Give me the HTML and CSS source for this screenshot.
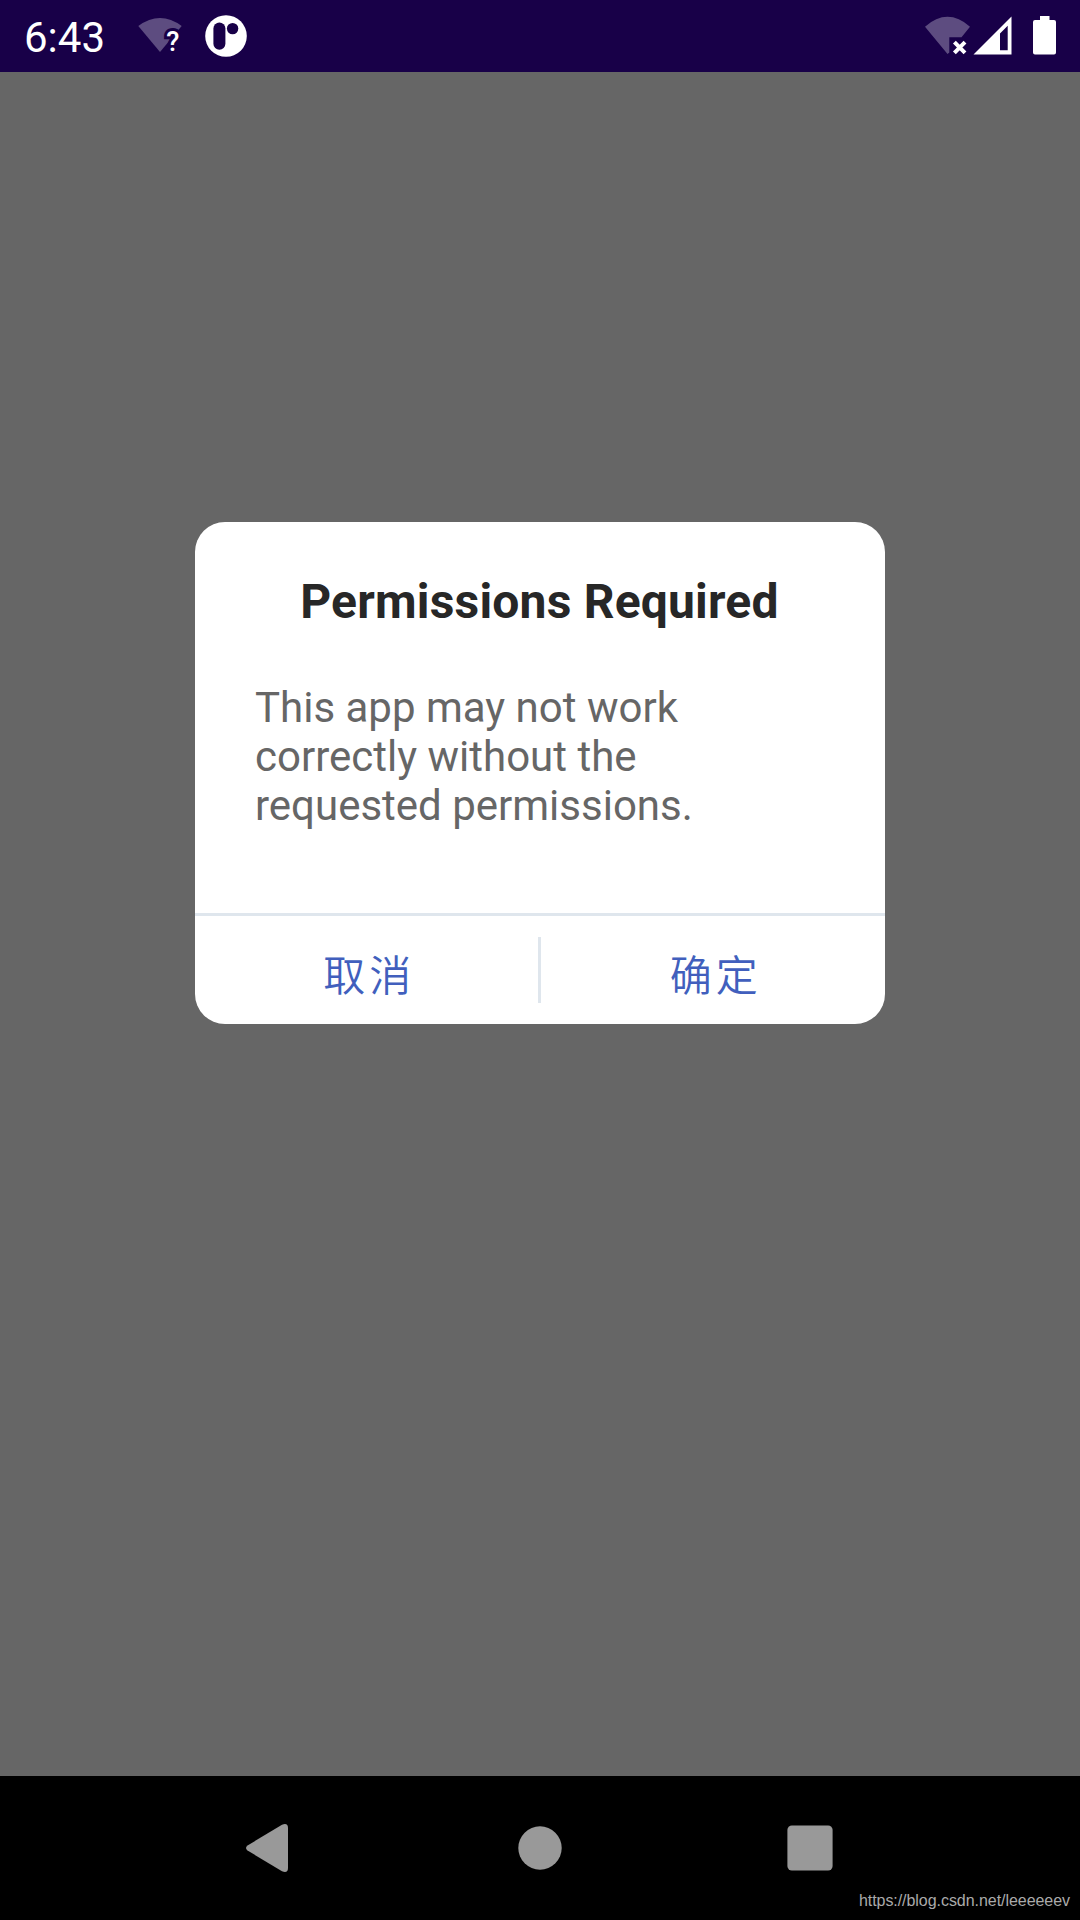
FILE: index.html
```
<!DOCTYPE html>
<html lang="zh-CN">
<head>
    <meta charset="UTF-8">
    <meta name="viewport" content="width=device-width, initial-scale=1.0">
    <title>Permissions Required</title>
    <link rel="stylesheet" href="styles.css">
</head>
<body>
    <header class="status-bar">
        <span class="time">6:43</span>
        <svg class="wifi-unknown" width="46" height="42" viewBox="137 16 46 42">
            <path d="M138.3 27Q160 11 181.7 27L160 53Z" fill="#5d4c80"/>
            <text x="166.2" y="52" class="mark">?</text>
        </svg>
        <svg class="app-icon" width="42" height="42" viewBox="205 15 42 42">
            <circle cx="226" cy="36" r="20.8" fill="#fff"/>
            <rect x="213.4" y="22.4" width="12" height="27.4" rx="6" fill="#180048"/>
            <circle cx="232.6" cy="28.6" r="5.7" fill="#180048"/>
        </svg>
        <svg class="system-icons" width="134" height="42" viewBox="924 15 134 42">
            <path d="M925 26.7Q947.5 7 970 26.7L961.5 37.2H949.3V52.5L947.5 54Z" fill="#5d4c80"/>
            <path d="M954.4 42.2L965 52.8M965 42.2L954.4 52.8" stroke="#fff" stroke-width="4"/>
            <path d="M973.5 54.5L1011.5 16.5V54.5ZM1000 33.5V50.3H1007.7V25.8Z" fill="#fff" fill-rule="evenodd"/>
            <path d="M1040 20V16H1049.5V20H1054Q1056 20 1056 22V52.6Q1056 54.6 1054 54.6H1035Q1033 54.6 1033 52.6V22Q1033 20 1035 20Z" fill="#fff"/>
        </svg>
    </header>

    <main class="overlay">
        <div class="dialog">
            <h1 class="title">Permissions Required</h1>
            <p class="message">This app may not work correctly without the requested permissions.</p>
            <div class="buttons">
                <button class="button">取消</button>
                <span class="divider"></span>
                <button class="button">确定</button>
            </div>
        </div>
    </main>

    <footer class="nav-bar">
        <svg class="nav-icon" width="48" height="48" viewBox="0 0 48 48">
            <path d="M1.5 21.5L36 0.7Q42 -1.5 42 4V44Q42 49.5 36 47.3L1.5 26.5Q-1.5 24 1.5 21.5Z" fill="#999"/>
        </svg>
        <svg class="nav-icon" width="48" height="48" viewBox="0 0 48 48">
            <circle cx="24" cy="24" r="21.7" fill="#999"/>
        </svg>
        <svg class="nav-icon" width="48" height="48" viewBox="0 0 48 48">
            <rect x="1.4" y="1.4" width="45.2" height="45.2" rx="4.5" fill="#999"/>
        </svg>
        <span class="watermark">https://blog.csdn.net/leeeeeev</span>
    </footer>
</body>
</html>
```
FILE: styles.css
```
body {
    margin: 0;
    height: 100vh;
    display: flex;
    flex-direction: column;
    background: #666;
    font-family: Roboto, 'Noto Sans CJK SC', sans-serif;
    overflow: hidden;
}
.status-bar {
    height: 72px;
    display: flex;
    align-items: center;
    box-sizing: border-box;
    padding: 0 22px 0 24px;
    background: #180048;
}
.time {
    width: 113px;
    padding-top: 3px;
    font-size: 42px;
    line-height: 72px;
    color: white;
}
.mark {
    font-size: 27px;
    font-weight: 500;
    fill: white;
    stroke: #180048;
    stroke-width: 6px;
    paint-order: stroke;
}
.app-icon {
    margin-left: 22px;
}
.system-icons {
    margin-left: auto;
}
.overlay {
    flex: 1;
    padding-top: 450px;
}
.dialog {
    width: 690px;
    height: 502px;
    margin: 0 auto;
    display: flex;
    flex-direction: column;
    border-radius: 30px;
    background: white;
}
.title {
    margin: 52px 0 0;
    padding-right: 1px;
    font-size: 48px;
    line-height: 56px;
    letter-spacing: 0.2px;
    text-align: center;
    color: #272727;
}
.message {
    margin: 53px 60px 0;
    font-size: 42px;
    line-height: 49px;
    color: #666;
}
.buttons {
    height: 108px;
    margin-top: auto;
    display: flex;
    align-items: center;
    border-top: 3px solid #dfe6ed;
}
.button {
    flex: 1;
    height: 108px;
    padding: 5px 0 0 5px;
    border: none;
    background: none;
    font-family: 'Noto Sans CJK SC', sans-serif;
    font-size: 42px;
    font-weight: 350;
    letter-spacing: 4px;
    color: #415fbd;
    cursor: pointer;
}
.divider {
    width: 3px;
    height: 66px;
    margin: 0 1px 0 -1px;
    background: #dfe6ed;
}
.nav-bar {
    position: relative;
    height: 144px;
    display: flex;
    align-items: center;
    justify-content: center;
    gap: 222px;
    background: black;
}
.watermark {
    position: absolute;
    right: 10px;
    bottom: 9px;
    font-family: 'Liberation Sans', sans-serif;
    font-size: 16px;
    line-height: 20px;
    letter-spacing: -0.05px;
    color: #aaa;
}
```
